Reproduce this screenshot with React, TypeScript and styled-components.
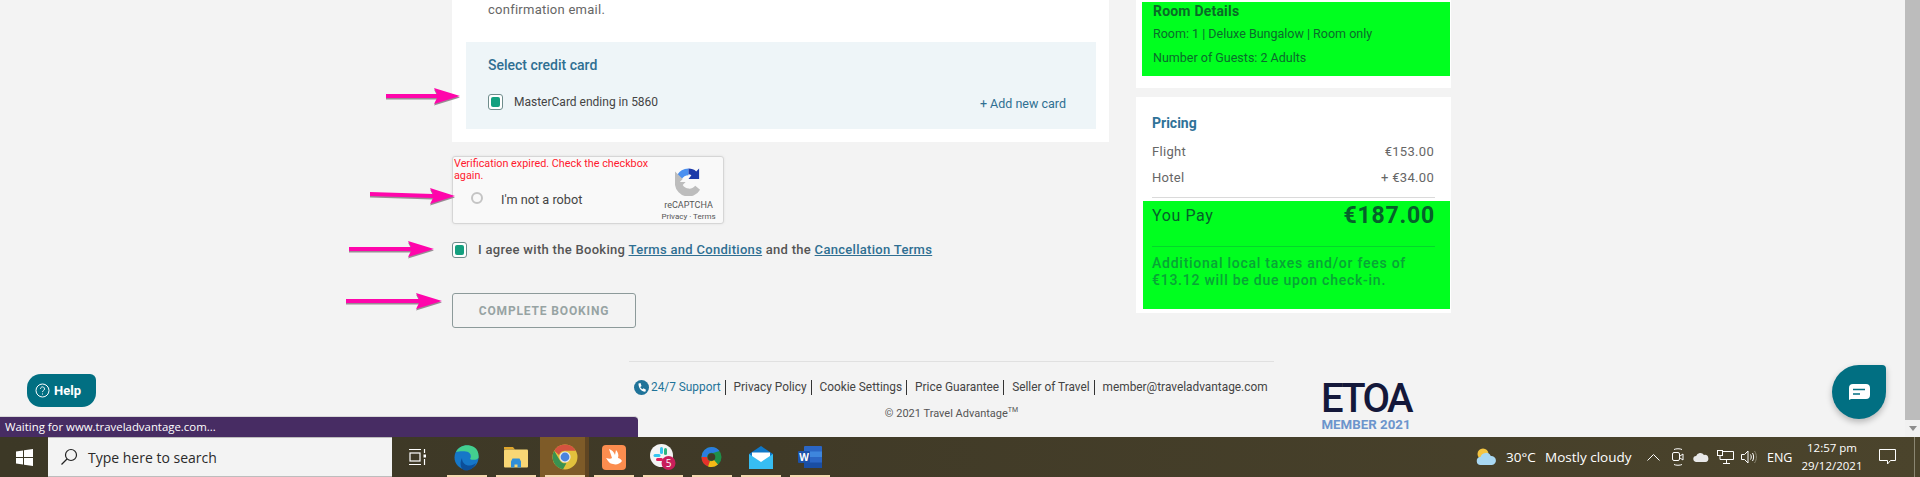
import * as React from "react";
import styled, { createGlobalStyle } from "styled-components";

const Global = createGlobalStyle`
  html, body { margin: 0; padding: 0; height: 477px; overflow: hidden; background: #f3f3f3; }
  body { font-family: Roboto, "Liberation Sans", sans-serif; color: #555; }
  * { box-sizing: border-box; }
`;

const Screen = styled.div`
  position: relative;
  width: 1920px;
  height: 477px;
  display: flex;
  flex-direction: column;
  overflow: hidden;
`;

const Browser = styled.div`
  height: 437px;
  display: flex;
`;

const Page = styled.main`
  flex: 1;
  display: flex;
  flex-direction: column;
`;

const Columns = styled.div`
  display: flex;
  gap: 27px;
  padding-left: 452px;
  height: 361px;
`;

const LeftCol = styled.section`
  width: 657px;
  display: flex;
  flex-direction: column;
`;

const RightCol = styled.aside`
  width: 315px;
  display: flex;
  flex-direction: column;
  gap: 9px;
`;

const PayCard = styled.div`
  background: #fff;
  height: 142px;
  padding: 0 13px 0 14px;
`;

const Intro = styled.p`
  margin: 0;
  height: 42px;
  padding: 2px 0 0 22px;
  font-size: 13px;
  line-height: 16px;
  letter-spacing: 0.25px;
  color: #666;
`;

const CardPanel = styled.div`
  background: #eef5f8;
  height: 87px;
  padding: 15px 30px 0 22px;
`;

const PanelTitle = styled.h3`
  margin: 0 0 17px;
  font-size: 14px;
  line-height: 17px;
  font-weight: 500;
  color: #2f6f92;
`;

const CardRow = styled.div`
  display: flex;
  justify-content: space-between;
`;

const CheckLabel = styled.label`
  display: flex;
  align-items: center;
  gap: 11px;
  font-size: 12px;
  color: #444;
`;

const CheckBox = styled.span`
  width: 15px;
  height: 16px;
  border: 1px solid #6f8d8c;
  border-radius: 3px;
  background: #fff;
  padding: 2px;
  display: block;
  &::after {
    content: "";
    display: block;
    width: 100%;
    height: 100%;
    border-radius: 2px;
    background: #13a07f;
  }
`;

const AddCard = styled.a`
  font-size: 12.5px;
  color: #2f6f92;
  padding-top: 5px;
  line-height: 16px;
`;

const Captcha = styled.div`
  margin-top: 14px;
  width: 272px;
  height: 68px;
  background: #f9f9f9;
  border: 1px solid #d6d6d6;
  border-radius: 3px;
  box-shadow: 0 0 3px rgba(0, 0, 0, 0.08);
  display: flex;
  position: relative;
`;

const CaptchaMain = styled.div`
  flex: 1;
  padding: 1px 0 0 1px;
`;

const CaptchaError = styled.div`
  font-size: 10.8px;
  line-height: 12px;
  color: #ff1a2e;
  width: 205px;
  height: 24px;
`;

const CaptchaCheck = styled.div`
  display: flex;
  align-items: center;
  gap: 18px;
  padding: 10px 0 0 17px;
  font-size: 12.7px;
  color: #444;
`;

const Radio = styled.span`
  width: 12px;
  height: 12px;
  margin-top: -3px;
  border-radius: 50%;
  border: 2.5px solid #c4c4c4;
`;

const CaptchaBrand = styled.div`
  width: 72px;
  display: flex;
  flex-direction: column;
  align-items: center;
  padding: 11px 5px 0 0;
  font-size: 9px;
  color: #555;
`;

const BrandName = styled.span`
  margin-top: 3px;
  line-height: 12px;
`;

const BrandLinks = styled.span`
  font-size: 8px;
  line-height: 11px;
  white-space: nowrap;
`;

const AgreeRow = styled(CheckLabel)`
  margin-top: 16px;
  font-size: 13px;
  font-weight: 500;
  color: #555;
  height: 19px;
  letter-spacing: 0.3px;
  & a {
    color: #2f6f92;
    text-decoration: underline;
    font-weight: 500;
  }
`;

const CompleteButton = styled.button`
  margin-top: 34px;
  width: 184px;
  height: 35px;
  background: transparent;
  border: 1px solid #8c9a9a;
  border-radius: 3px;
  font-family: inherit;
  font-size: 12px;
  font-weight: 700;
  letter-spacing: 0.85px;
  color: #97a3a3;
`;

const SideCard = styled.div<{ $h: number }>`
  background: #fff;
  height: ${(p) => p.$h}px;
  padding-left: 6px;
  padding-right: 1px;
`;

const RoomHighlight = styled.div`
  margin-top: 2px;
  height: 74px;
  background: #00ff1f;
  padding: 1px 0 0 11px;
  color: #0a6a27;
`;

const RoomTitle = styled.h4`
  margin: 0 0 6px;
  font-size: 14px;
  line-height: 17px;
  font-weight: 700;
  letter-spacing: 0.2px;
  color: #0a6a27;
`;

const RoomLine = styled.p`
  margin: 0 0 8px;
  font-size: 12.5px;
  line-height: 16px;
  color: #0b6b2c;
`;

const PricingBody = styled.div`
  padding: 16px 16px 0 10px;
  height: 100px;
`;

const PricingTitle = styled.h4`
  margin: 0 0 11px;
  font-size: 14px;
  line-height: 20px;
  font-weight: 700;
  color: #2f7298;
`;

const PriceRow = styled.div`
  display: flex;
  justify-content: space-between;
  font-size: 13px;
  line-height: 16px;
  letter-spacing: 0.3px;
  margin-bottom: 10px;
  color: #666;
`;

const PayHighlight = styled.div`
  height: 108px;
  margin: 3px 0 0 1px;
  background: #00ff1f;
  padding: 0 15px 0 9px;
`;

const Rule = styled.div`
  height: 1px;
  margin-right: 15px;
  margin-left: 10px;
  background: #dadada;
`;

const TotalRow = styled.div`
  display: flex;
  justify-content: space-between;
  align-items: center;
  height: 28px;
  color: #06602a;
  font-size: 16px;
  letter-spacing: 0.6px;
`;

const TotalAmount = styled.strong`
  font-size: 23px;
  font-weight: 700;
  letter-spacing: 0.8px;
  color: #06602a;
`;

const TaxNote = styled.p`
  margin: 17px 0 0;
  padding-top: 8px;
  border-top: 1px solid #04d62c;
  font-size: 14px;
  line-height: 17px;
  font-weight: 500;
  letter-spacing: 0.75px;
  color: #08a436;
`;

const FooterWrap = styled.footer`
  display: flex;
  padding-left: 629px;
  gap: 46px;
`;

const FooterMain = styled.div`
  width: 645px;
  border-top: 1px solid #e0e0e0;
  padding-top: 18px;
  text-align: center;
`;

const FooterLinks = styled.nav`
  display: flex;
  align-items: center;
  padding-left: 5px;
  font-size: 11.85px;
  line-height: 15px;
  height: 15px;
  color: #444;
  white-space: nowrap;
`;

const FooterLink = styled.a<{ $last?: boolean; $blue?: boolean }>`
  padding: 0 ${(p) => (p.$last ? 0 : 4)}px 0 8px;
  border-right: ${(p) => (p.$last ? "none" : "1px solid #333")};
  color: ${(p) => (p.$blue ? "#1f7399" : "#444")};
  &:first-child {
    padding-left: 0;
    display: flex;
    align-items: center;
    gap: 2px;
  }
`;

const Copyright = styled.div`
  margin-top: 12px;
  font-size: 11px;
  line-height: 14px;
  color: #555;
  & sup {
    font-size: 7px;
    line-height: 0;
  }
`;

const Etoa = styled.div`
  padding-top: 20px;
  width: 92px;
  text-align: center;
`;

const EtoaMark = styled.div`
  font-size: 40px;
  line-height: 36px;
  height: 36px;
  font-weight: 500;
  color: #14183a;
  letter-spacing: -2.6px;
`;

const EtoaMember = styled.div`
  margin-top: 1px;
  font-size: 13.3px;
  line-height: 14px;
  font-weight: 700;
  white-space: nowrap;
  color: #6c95cc;
`;

const ScrollBar = styled.div`
  width: 15px;
  background: #f1f1f1;
  display: flex;
  flex-direction: column;
  align-items: center;
`;

const ScrollThumb = styled.div`
  width: 100%;
  height: 420px;
  background: #bcbcbc;
`;

const ScrollArrow = styled.div`
  margin-top: 6px;
  width: 0;
  height: 0;
  border-left: 4px solid transparent;
  border-right: 4px solid transparent;
  border-top: 5px solid #8d8d8d;
`;

const HelpButton = styled.button`
  position: absolute;
  left: 27px;
  top: 374px;
  width: 69px;
  height: 33px;
  border: 0;
  border-radius: 14px 6px 14px 14px;
  background: #016f82;
  color: #fff;
  font-family: inherit;
  font-size: 13px;
  font-weight: 700;
  display: flex;
  align-items: center;
  gap: 4px;
  padding: 0 0 0 8px;
`;

const ChatBubble = styled.button`
  position: absolute;
  left: 1832px;
  top: 365px;
  width: 54px;
  height: 54px;
  border: 0;
  padding: 0;
  border-radius: 50% 4px 50% 50%;
  background: #016f82;
  box-shadow: 0 3px 6px rgba(0, 0, 0, 0.25);
  display: flex;
  align-items: center;
  justify-content: center;
`;

const StatusBar = styled.div`
  position: absolute;
  left: 0;
  top: 416px;
  width: 638px;
  height: 21px;
  background: #472c63;
  border-top: 1px solid #d8d8d8;
  border-top-right-radius: 4px;
  color: #fff;
  font-size: 11.4px;
  line-height: 20px;
  padding-left: 5px;
  font-family: "Open Sans", sans-serif;
`;

const Arrow = styled.svg<{ $x: number; $y: number }>`
  position: absolute;
  left: ${(p) => p.$x}px;
  top: ${(p) => p.$y}px;
  overflow: visible;
`;

const Taskbar = styled.footer`
  height: 40px;
  display: flex;
  align-items: stretch;
  background: linear-gradient(90deg, #3c3826 0%, #403a27 40%, #4b442c 100%);
  color: #fff;
  font-family: "Open Sans", sans-serif;
`;

const StartButton = styled.div`
  width: 48px;
  display: flex;
  align-items: center;
  justify-content: center;
`;

const SearchBox = styled.div`
  width: 344px;
  background: #f3f3f3;
  border-top: 1px solid #bdbdbd;
  border-bottom: 1px solid #bdbdbd;
  display: flex;
  align-items: center;
  gap: 10px;
  padding-left: 12px;
  font-size: 14px;
  color: #2a2a2a;
`;

const TaskView = styled.div`
  width: 50px;
  display: flex;
  align-items: center;
  justify-content: center;
`;

const TaskApp = styled.div<{ $active?: boolean }>`
  width: 49px;
  position: relative;
  display: flex;
  align-items: center;
  justify-content: center;
  background: ${(p) => (p.$active ? "linear-gradient(90deg, #7e5b28 0 92%, #5f4522 92%)" : "transparent")};
  &::after {
    content: "";
    position: absolute;
    left: 5px;
    right: 4px;
    bottom: 0;
    height: 2px;
    background: #f5d9b0;
  }
`;

const Tray = styled.div`
  margin: 0 5px 0 auto;
  display: flex;
  align-items: center;
  padding-right: 18px;
  border-right: 1px solid #8a8672;
`;

const Weather = styled.span<{ $w: number }>`
  width: ${(p) => p.$w}px;
  font-size: 13.5px;
  white-space: nowrap;
`;

const TrayLang = styled.span`
  width: 23px;
  font-size: 12.5px;
  white-space: nowrap;
`;

const TrayIcon = styled.span<{ $w: number }>`
  width: ${(p) => p.$w}px;
  display: flex;
  align-items: center;
`;

const Clock = styled.div`
  width: 84px;
  margin-right: 5px;
  text-align: center;
  font-size: 11.5px;
  line-height: 18px;
`;

function PinkArrow({ x, y, len, head, tail = 0 }: { x: number; y: number; len: number; head: number; tail?: number }) {
  const b = len - head;
  const d = `M0 ${6 + tail} L${b} 6 L${b - 3} 0 L${len} 8 L${b - 3} 16 L${b} 10 L0 ${10 + tail} Z`;
  return (
    <Arrow $x={x} $y={y} width={len} height={16} viewBox={`0 0 ${len} 16`}>
      <path d={d} fill="#9a8a94" transform="translate(0 1.5)" />
      <path d={d} fill="#ff05ab" />
    </Arrow>
  );
}

const Chrome = () => (
  <svg width="26" height="26" viewBox="0 0 26 26">
    <circle cx="13" cy="13" r="12.5" fill="#e2c13c" />
    <path d="M13 .5A12.5 12.5 0 0 1 23.8 6.7H13a6.3 6.3 0 0 0-6 4.4L2.2 6.8A12.5 12.5 0 0 1 13 .5Z" fill="#d5533f" />
    <path d="M2.2 6.8 7.6 16a6.3 6.3 0 0 0 6.8 3.2l-3.3 6.1A12.5 12.5 0 0 1 2.2 6.8Z" fill="#3a9150" />
    <circle cx="13" cy="13" r="5.6" fill="#e9e9e9" />
    <circle cx="13" cy="13" r="4.4" fill="#4b84dd" />
  </svg>
);

const EdgeIcon = () => (
  <svg width="25" height="27" viewBox="0 0 25 27">
    <circle cx="12.5" cy="13.5" r="12" fill="#1677c8" />
    <path d="M2 8C5 1 14-.5 20 3c4 2.500 5 7 4.500 11-1.500 2-6 2.500-8.500 1 2-3 .5-7-4-7.500C8 7 4 7.500 2 8Z" fill="#43cf8f" />
    <path d="M8 14c0 5 4 8 8 7.500 2 0 4-1 6-2.500-2 5-6 7.500-10 7.500C7 26.500 5 20 8 14Z" fill="#0c4f9a" />
  </svg>
);

const FolderIcon = () => (
  <svg width="24" height="22" viewBox="0 0 24 22">
    <path d="M0 1h9l2 2.500h-11Z" fill="#e0a52b" />
    <rect y="3.500" width="24" height="18" rx="1" fill="#f8d775" />
    <path d="M7 21.500v-6l1.500-3h7l1.500 3v6h-3.500v-3h-3v3Z" fill="#2f8fd8" />
  </svg>
);

const RabbitIcon = () => (
  <svg width="24" height="25" viewBox="0 0 24 25">
    <rect width="24" height="25" rx="4" fill="#fb8d4f" />
    <path d="M4 13c3 1 5 1 6 0L7 4c3 1 5 3 6 6l1-5c2 2 3 5 2 8 1 0 3 1 4 3-2 3-6 4-9 3-3 0-5-3-7-6Z" fill="#fff" />
  </svg>
);

const SlackIcon = () => (
  <svg width="26" height="26" viewBox="0 0 26 26">
    <circle cx="11.500" cy="11.500" r="11.500" fill="#f4f4f4" />
    <rect x="10" y="3" width="3" height="7" rx="1.500" fill="#35c5f0" />
    <rect x="3.500" y="10" width="7" height="3" rx="1.500" fill="#35c5f0" />
    <rect x="14" y="4" width="3" height="7" rx="1.500" fill="#2eb67d" />
    <rect x="6" y="14" width="7" height="3" rx="1.500" fill="#e01e5a" />
    <circle cx="18.500" cy="19" r="7" fill="#c81e5b" />
    <text x="18.500" y="22.500" fontSize="10" textAnchor="middle" fill="#fff" fontFamily="Open Sans">5</text>
  </svg>
);

const SwirlIcon = () => (
  <svg width="23" height="24" viewBox="0 0 23 24">
    <circle cx="11.500" cy="12" r="10" fill="#1f8f4a" />
    <path d="M1.500 12A10 10 0 0 1 11.500 2a10 10 0 0 1 8 4L13 8a4.500 4.500 0 0 0-6 4Z" fill="#2b7de0" />
    <path d="M1.500 12A10 10 0 0 0 8 21.400L10 16a4.500 4.500 0 0 1-3-4Z" fill="#e5322b" />
    <path d="M8 21.400a10 10 0 0 0 10-2L14 15a4.500 4.500 0 0 1-4 1Z" fill="#f6b916" />
    <circle cx="11.500" cy="12" r="3.800" fill="#403a27" />
  </svg>
);

const MailIcon = () => (
  <svg width="24" height="23" viewBox="0 0 24 23">
    <path d="M0 8 12 0l12 8v15H0Z" fill="#0f78c8" />
    <path d="M3 6.500h18V13l-9 5-9-5Z" fill="#fff" />
    <path d="M0 8 12 16 24 8v15H0Z" fill="#37bdf2" />
  </svg>
);

const WordIcon = () => (
  <svg width="24" height="22" viewBox="0 0 24 22">
    <rect x="6" width="18" height="22" rx="1" fill="#2b66c4" />
    <rect x="6" y="5.500" width="18" height="5.500" fill="#3e86dd" />
    <rect x="6" y="16.500" width="18" height="5.500" fill="#1a4ea3" />
    <rect y="5" width="12" height="12" rx="1" fill="#1d52a8" />
    <text x="6" y="15" fontSize="10" fontWeight="700" textAnchor="middle" fill="#fff" fontFamily="Open Sans">W</text>
  </svg>
);

export default function App() {
  return (
    <Screen>
      <Global />
      <Browser>
        <Page>
          <Columns>
            <LeftCol>
              <PayCard>
                <Intro>confirmation email.</Intro>
                <CardPanel>
                  <PanelTitle>Select credit card</PanelTitle>
                  <CardRow>
                    <CheckLabel>
                      <CheckBox />
                      MasterCard ending in 5860
                    </CheckLabel>
                    <AddCard>+ Add new card</AddCard>
                  </CardRow>
                </CardPanel>
              </PayCard>
              <Captcha>
                <CaptchaMain>
                  <CaptchaError>Verification expired. Check the checkbox again.</CaptchaError>
                  <CaptchaCheck>
                    <Radio />
                    I'm not a robot
                  </CaptchaCheck>
                </CaptchaMain>
                <CaptchaBrand>
                  <svg width="27" height="28" viewBox="0 0 28 28">
                    <path d="M14 0A14 14 0 0 0 2 7l5 4A8 8 0 0 1 14 7Z" fill="#4a90f0" />
                    <path d="M14 0c3 0 6 1 8 3l3-3v11H14l3-4a7 7 0 0 0-3-1Z" fill="#1c3aa9" />
                    <path d="M0 14h11l-3 3a8 8 0 0 0 13 1l5 4A14 14 0 0 1 0 17Z" fill="#bdbdbd" />
                    <path d="M0 14V3l3 3 5 5-3 3Z" fill="#bdbdbd" />
                  </svg>
                  <BrandName>reCAPTCHA</BrandName>
                  <BrandLinks>Privacy · Terms</BrandLinks>
                </CaptchaBrand>
              </Captcha>
              <AgreeRow>
                <CheckBox />
                <span>
                  I agree with the Booking <a>Terms and Conditions</a> and the <a>Cancellation Terms</a>
                </span>
              </AgreeRow>
              <CompleteButton>COMPLETE BOOKING</CompleteButton>
            </LeftCol>
            <RightCol>
              <SideCard $h={88}>
                <RoomHighlight>
                  <RoomTitle>Room Details</RoomTitle>
                  <RoomLine>Room: 1 | Deluxe Bungalow | Room only</RoomLine>
                  <RoomLine>Number of Guests: 2 Adults</RoomLine>
                </RoomHighlight>
              </SideCard>
              <SideCard $h={216}>
                <PricingBody>
                  <PricingTitle>Pricing</PricingTitle>
                  <PriceRow>
                    <span>Flight</span>
                    <span>€153.00</span>
                  </PriceRow>
                  <PriceRow>
                    <span>Hotel</span>
                    <span>+ €34.00</span>
                  </PriceRow>
                </PricingBody>
                <Rule />
                <PayHighlight>
                  <TotalRow>
                    <span>You Pay</span>
                    <TotalAmount>€187.00</TotalAmount>
                  </TotalRow>
                  <TaxNote>
                    Additional local taxes and/or fees of
                    <br />
                    €13.12 will be due upon check-in.
                  </TaxNote>
                </PayHighlight>
              </SideCard>
            </RightCol>
          </Columns>
          <FooterWrap>
            <FooterMain>
              <FooterLinks>
                <FooterLink $blue>
                  <svg width="15" height="15" viewBox="0 0 15 15">
                    <circle cx="7.500" cy="7.500" r="7.500" fill="#1f7399" />
                    <path d="M4.500 3.500 6.500 3l1 3-1.200 1c.4 1 1 1.800 2.200 2.300l1-1 2.500 1.500-.7 2c-3.800.2-7-4-6.800-8.300Z" fill="#fff" />
                  </svg>
                  24/7 Support
                </FooterLink>
                <FooterLink>Privacy Policy</FooterLink>
                <FooterLink>Cookie Settings</FooterLink>
                <FooterLink>Price Guarantee</FooterLink>
                <FooterLink>Seller of Travel</FooterLink>
                <FooterLink $last>member@traveladvantage.com</FooterLink>
              </FooterLinks>
              <Copyright>
                © 2021 Travel Advantage<sup>TM</sup>
              </Copyright>
            </FooterMain>
            <Etoa>
              <EtoaMark>ETOA</EtoaMark>
              <EtoaMember>MEMBER 2021</EtoaMember>
            </Etoa>
          </FooterWrap>
        </Page>
        <ScrollBar>
          <ScrollThumb />
          <ScrollArrow />
        </ScrollBar>
      </Browser>

      <Taskbar>
        <StartButton>
          <svg width="17" height="17" viewBox="0 0 17 17" fill="#fff">
            <path d="M0 2.400 7 1.400V8H0ZM8 1.200 17 0V8H8ZM0 9h7v6.600L0 14.600ZM8 9h9v8l-9-1.200Z" />
          </svg>
        </StartButton>
        <SearchBox>
          <svg width="18" height="18" viewBox="0 0 18 18" fill="none" stroke="#222" strokeWidth="1.200">
            <circle cx="11" cy="7" r="5.500" />
            <path d="M7 11 1.500 16.500" />
          </svg>
          Type here to search
        </SearchBox>
        <TaskView>
          <svg width="17" height="18" viewBox="0 0 17 18" fill="none" stroke="#fff" strokeWidth="1.200">
            <rect x="1" y="5" width="10" height="8" />
            <path d="M0 1.500h12M0 16.500h12M15.500 1v4M15.500 11v6" />
            <rect x="14.500" y="6.500" width="2.500" height="3" fill="#fff" stroke="none" />
          </svg>
        </TaskView>
        <TaskApp><EdgeIcon /></TaskApp>
        <TaskApp><FolderIcon /></TaskApp>
        <TaskApp $active><Chrome /></TaskApp>
        <TaskApp><RabbitIcon /></TaskApp>
        <TaskApp><SlackIcon /></TaskApp>
        <TaskApp><SwirlIcon /></TaskApp>
        <TaskApp><MailIcon /></TaskApp>
        <TaskApp><WordIcon /></TaskApp>
        <Tray>
          <TrayIcon $w={30}>
            <svg width="21" height="18" viewBox="0 0 21 18">
              <circle cx="7" cy="6" r="5.500" fill="#f4c542" />
              <path d="M5 17a4 4 0 0 1-.5-8 5.500 5.500 0 0 1 10.300-1A4.500 4.500 0 0 1 16 17Z" fill="#a9d8f2" />
            </svg>
          </TrayIcon>
          <Weather $w={39}>30°C</Weather>
          <Weather $w={102}>Mostly cloudy</Weather>
          <TrayIcon $w={25}>
            <svg width="13" height="8" viewBox="0 0 13 8" fill="none" stroke="#fff" strokeWidth="1">
              <path d="M.5 7.500 6.500 1.500l6 6" />
            </svg>
          </TrayIcon>
          <TrayIcon $w={21}>
            <svg width="12" height="18" viewBox="0 0 12 18" fill="none" stroke="#fff" strokeWidth="1">
              <path d="M2 1.500c2-1 6-1 8 0M2 16.500c2 1 6 1 8 0" />
              <rect x=".5" y="4.500" width="7" height="8" rx="1.500" />
              <path d="M8 8l3-2v6l-3-2" />
            </svg>
          </TrayIcon>
          <TrayIcon $w={24}>
            <svg width="16" height="10" viewBox="0 0 16 10">
              <path d="M3.500 10a3 3 0 0 1-.4-6A4.500 4.500 0 0 1 11 3a3.500 3.500 0 0 1 1.500 7Z" fill="#e8e8e8" />
            </svg>
          </TrayIcon>
          <TrayIcon $w={24}>
            <svg width="17" height="14" viewBox="0 0 17 14" fill="none" stroke="#fff" strokeWidth="1">
              <path d="M6 1.500h10.500v8H3V6M9.500 9.500v4M6 13.500h7" />
              <rect x=".5" y=".5" width="5" height="5" />
            </svg>
          </TrayIcon>
          <TrayIcon $w={26}>
            <svg width="16" height="14" viewBox="0 0 16 14" fill="none" stroke="#fff" strokeWidth="1">
              <path d="M.5 4.500h3L7 1v12L3.500 9.500h-3ZM9.500 4.500c1 1.500 1 3.500 0 5M11.500 3c1.500 2.500 1.500 5.500 0 8" />
              <path d="M13.500 1c2.500 3.500 2.500 8.500 0 12" stroke="#8a8672" />
            </svg>
          </TrayIcon>
          <TrayLang>ENG</TrayLang>
          <Clock>
            12:57 pm
            <br />
            29/12/2021
          </Clock>
          <TrayIcon $w={17}>
            <svg width="17" height="16" viewBox="0 0 17 16" fill="none" stroke="#fff" strokeWidth="1">
              <path d="M.5.500h16v11h-5l-3 3.500v-3.500h-8Z" />
            </svg>
          </TrayIcon>
        </Tray>
      </Taskbar>

      <HelpButton>
        <svg width="15" height="15" viewBox="0 0 15 15" fill="none" stroke="#fff" strokeWidth="1">
          <circle cx="7.500" cy="7.500" r="6.500" />
          <path d="M5.500 5.800a2 2 0 1 1 3 1.800c-.7.400-1 .8-1 1.500M7.500 10.500v1" />
        </svg>
        Help
      </HelpButton>
      <ChatBubble>
        <svg width="22" height="16" viewBox="0 0 22 16">
          <path d="M5 0h13a4 4 0 0 1 4 4v7a4 4 0 0 1-4 4H3L1 16V4a4 4 0 0 1 4-4Z" fill="#fff" />
          <path d="M5 5.500h12M5 10h7" stroke="#016f82" strokeWidth="1.500" />
        </svg>
      </ChatBubble>
      <StatusBar>Waiting for www.traveladvantage.com...</StatusBar>

      <PinkArrow x={386} y={88} len={74} head={23} />
      <PinkArrow x={370} y={188} len={85} head={22} tail={-2} />
      <PinkArrow x={349} y={241} len={85} head={23} />
      <PinkArrow x={346} y={293} len={96} head={23} />
    </Screen>
  );
}
